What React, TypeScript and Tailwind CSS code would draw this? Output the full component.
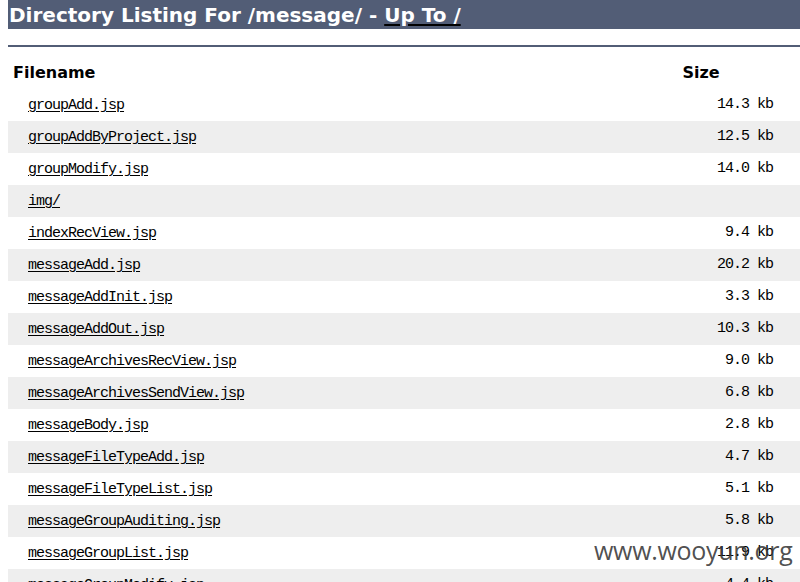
import React from 'react';

const files: [string, string][] = [
  ['groupAdd.jsp', '14.3 kb'],
  ['groupAddByProject.jsp', '12.5 kb'],
  ['groupModify.jsp', '14.0 kb'],
  ['img/', ''],
  ['indexRecView.jsp', '9.4 kb'],
  ['messageAdd.jsp', '20.2 kb'],
  ['messageAddInit.jsp', '3.3 kb'],
  ['messageAddOut.jsp', '10.3 kb'],
  ['messageArchivesRecView.jsp', '9.0 kb'],
  ['messageArchivesSendView.jsp', '6.8 kb'],
  ['messageBody.jsp', '2.8 kb'],
  ['messageFileTypeAdd.jsp', '4.7 kb'],
  ['messageFileTypeList.jsp', '5.1 kb'],
  ['messageGroupAuditing.jsp', '5.8 kb'],
  ['messageGroupList.jsp', '11.9 kb'],
  ['messageGroupModify.jsp', '4.4 kb'],
];

const tt = "font-['Liberation_Mono',monospace] text-[15px] tracking-[-1px] text-black";

const App: React.FC = () => {
  return (
    <div className="relative h-[582px] w-[800px] overflow-hidden bg-white pl-2 font-['DejaVu_Sans',Tahoma,sans-serif]">
      {/* title bar */}
      <h1 className="flex h-[29px] items-center whitespace-nowrap bg-[#525D76] pl-[1px] text-[20px] font-bold leading-none text-white">
        Directory Listing For /message/ -&nbsp;<a href="#" className="underline decoration-black decoration-2 underline-offset-2">Up To /</a>
      </h1>
      <div className="mt-[16px] h-[2px] bg-[#525D76]" />

      <div className="mt-[10px]">
        <div className="flex h-[32px] items-center text-[16px] font-bold text-black">
          <div className="w-[617px] pl-[5px]">Filename</div>
          <div className="w-[152px] text-center">Size</div>
        </div>
        {files.map(([name, size], i) => (
          <div key={name} className={`flex h-[32px] items-center ${i % 2 === 1 ? 'bg-[#eeeeee]' : 'bg-white'}`}>
            <div className="w-[617px] pl-[20px]">
              <a href="#" className={`${tt} underline underline-offset-2`}>{name}</a>
            </div>
            <div className={`w-[152px] pr-[4px] text-right ${tt}`}>{size}</div>
          </div>
        ))}
      </div>

      {/* watermark */}
      <div className="absolute left-[594px] top-[538px] font-['Open_Sans',sans-serif] text-[25px] leading-none tracking-[-0.3px] text-[#3a3a3a]/90">
        www.wooyun.org
      </div>
    </div>
  );
};

export default App;
